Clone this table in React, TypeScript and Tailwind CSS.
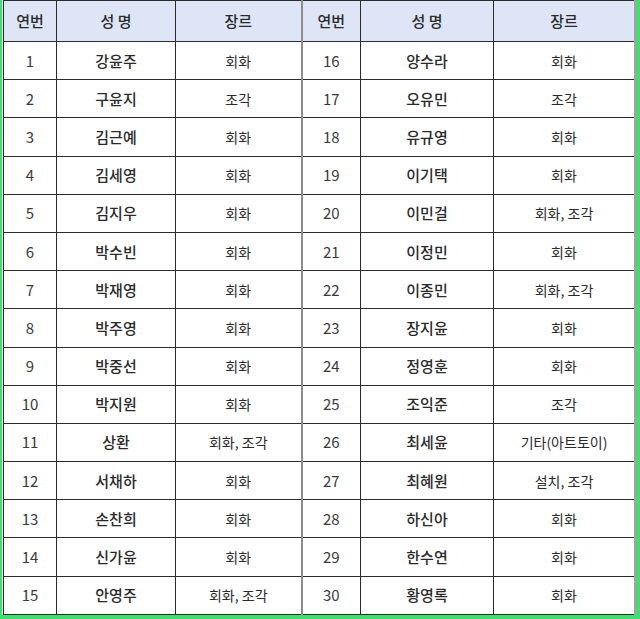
import React from 'react';

type Row = { no: number; name: string; genre: string };

const LEFT: Row[] = [
  { no: 1, name: '강윤주', genre: '회화' },
  { no: 2, name: '구윤지', genre: '조각' },
  { no: 3, name: '김근예', genre: '회화' },
  { no: 4, name: '김세영', genre: '회화' },
  { no: 5, name: '김지우', genre: '회화' },
  { no: 6, name: '박수빈', genre: '회화' },
  { no: 7, name: '박재영', genre: '회화' },
  { no: 8, name: '박주영', genre: '회화' },
  { no: 9, name: '박중선', genre: '회화' },
  { no: 10, name: '박지원', genre: '회화' },
  { no: 11, name: '상환', genre: '회화, 조각' },
  { no: 12, name: '서채하', genre: '회화' },
  { no: 13, name: '손찬희', genre: '회화' },
  { no: 14, name: '신가윤', genre: '회화' },
  { no: 15, name: '안영주', genre: '회화, 조각' },
];

const RIGHT: Row[] = [
  { no: 16, name: '양수라', genre: '회화' },
  { no: 17, name: '오유민', genre: '조각' },
  { no: 18, name: '유규영', genre: '회화' },
  { no: 19, name: '이기택', genre: '회화' },
  { no: 20, name: '이민걸', genre: '회화, 조각' },
  { no: 21, name: '이정민', genre: '회화' },
  { no: 22, name: '이종민', genre: '회화, 조각' },
  { no: 23, name: '장지윤', genre: '회화' },
  { no: 24, name: '정영훈', genre: '회화' },
  { no: 25, name: '조익준', genre: '조각' },
  { no: 26, name: '최세윤', genre: '기타(아트토이)' },
  { no: 27, name: '최혜원', genre: '설치, 조각' },
  { no: 28, name: '하신아', genre: '회화' },
  { no: 29, name: '한수연', genre: '회화' },
  { no: 30, name: '황영록', genre: '회화' },
];

const cell = 'border border-[#2b2b2b] text-center align-middle p-0 leading-[18px]';
const mid = 'border-r-2 border-r-[#8c8c8c]';

export default function App() {
  return (
    <div
      className="w-[640px] h-[619px] bg-[#3fe070] pl-[2px] pr-[4px] pb-[4px]"
      style={{ fontFamily: '"Noto Sans CJK KR", "Noto Sans", sans-serif' }}
    >
      <div className="h-full bg-white pl-[1px] border-r-2 border-[#a3a3a3] overflow-hidden">
        <table className="w-[631px] table-fixed border-collapse text-[14px] text-[#2a2a2a]">
          <colgroup>
            <col className="w-[53px]" />
            <col className="w-[119px]" />
            <col className="w-[126px]" />
            <col className="w-[59px]" />
            <col className="w-[133px]" />
            <col className="w-[141px]" />
          </colgroup>
          <thead>
            <tr className="h-[41px] bg-[#dde5f6] text-[15px]">
              <th className={`${cell} font-medium`}>연번</th>
              <th className={`${cell} font-medium`}>성 명</th>
              <th className={`${cell} font-medium ${mid}`}>장르</th>
              <th className={`${cell} font-medium`}>연번</th>
              <th className={`${cell} font-medium`}>성 명</th>
              <th className={`${cell} font-medium`}>장르</th>
            </tr>
          </thead>
          <tbody>
            {LEFT.map((l, i) => {
              const r = RIGHT[i];
              return (
                <tr key={l.no} className="h-[38.2px]">
                  <td className={`${cell} text-[15px] text-[#3a3a3a]`}>{l.no}</td>
                  <td className={`${cell} text-[15px] font-medium`}>{l.name}</td>
                  <td className={`${cell} ${mid}`}>{l.genre}</td>
                  <td className={`${cell} text-[15px] text-[#3a3a3a]`}>{r.no}</td>
                  <td className={`${cell} text-[15px] font-medium`}>{r.name}</td>
                  <td className={cell}>{r.genre}</td>
                </tr>
              );
            })}
          </tbody>
        </table>
      </div>
    </div>
  );
}
